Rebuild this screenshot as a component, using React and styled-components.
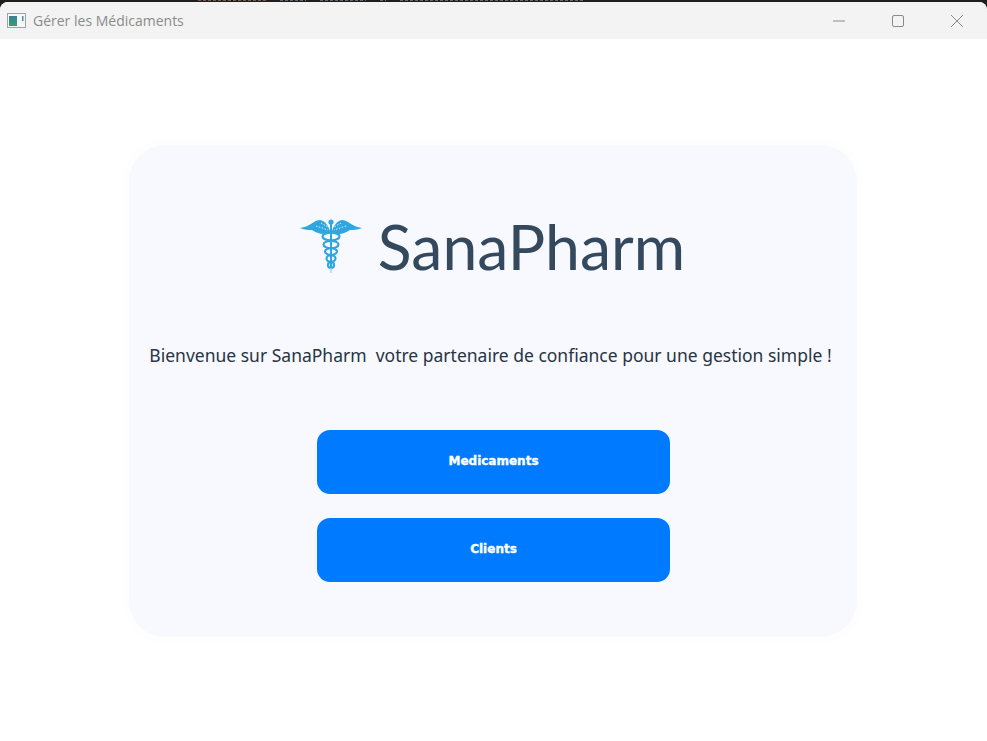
import React from 'react';
import styled, { createGlobalStyle } from 'styled-components';

const Global = createGlobalStyle`
  html, body {
    margin: 0;
    padding: 0;
    background: #fff;
  }
  body {
    font-family: "Open Sans", "Noto Sans", "Liberation Sans", sans-serif;
  }
`;

const Screen = styled.div`
  width: 987px;
  height: 741px;
  overflow: hidden;
  background: #1e1e1e;
`;

// sliver of the window behind, only a couple of pixels show
const BehindStrip = styled.svg`
  display: block;
  width: 987px;
  height: 2px;
`;

const Window = styled.div`
  height: 739px;
  background: #fff;
  border-radius: 8px 8px 0 0;
  display: flex;
  flex-direction: column;
  overflow: hidden;
`;

const TitleBar = styled.div`
  height: 37px;
  flex: none;
  background: #f3f3f3;
  display: flex;
  align-items: center;
  padding-left: 7px;
`;

const AppIcon = styled.svg`
  width: 19px;
  height: 15px;
  flex: none;
`;

const Title = styled.div`
  margin-left: 7px;
  font-size: 14px;
  color: #8b8b8b;
  flex: 1;
`;

const Controls = styled.div`
  display: flex;
  height: 100%;
  margin-right: 1px;
`;

const Control = styled.div`
  width: 59px;
  display: flex;
  align-items: center;
  justify-content: center;
  color: #8a8a8a;
`;

const Body = styled.div`
  flex: 1;
  display: flex;
  justify-content: center;
  padding: 106px 130px 0 129px;
`;

const Card = styled.div`
  width: 728px;
  height: 492px;
  background: #f8f9ff;
  border-radius: 36px;
  box-shadow: 0 0 0 6px #fefefe;
  display: flex;
  flex-direction: column;
  align-items: center;
`;

const Brand = styled.div`
  display: flex;
  align-items: center;
  margin-top: 60px;
  height: 82px;
  gap: 15px;
  margin-left: -2px;
`;

const Logo = styled.svg`
  width: 64px;
  height: 54px;
  flex: none;
`;

const BrandName = styled.div`
  font-family: Lato, "Noto Sans", sans-serif;
  font-size: 62.5px;
  line-height: 82px;
  color: #34495e;
`;

const Welcome = styled.p`
  margin: 55px 0 0 -5px;
  font-family: "Noto Sans", sans-serif;
  font-size: 17.5px;
  line-height: 26px;
  color: #28343f;
  white-space: pre;
`;

const Actions = styled.div`
  margin-top: 62px;
  display: flex;
  flex-direction: column;
  gap: 24px;
`;

const ActionButton = styled.button`
  width: 353px;
  height: 64px;
  border: none;
  border-radius: 13px;
  background: #007bff;
  color: #fff;
  font-family: "DejaVu Sans", sans-serif;
  font-weight: 700;
  font-size: 12px;
  -webkit-text-stroke: 0.35px #fff;
  padding: 0 0 2px 1px;
`;

const rings = [
  [17.5, 8.5, 3.8],
  [25.5, 7.5, 3.7],
  [32.5, 6, 3.4],
  [39.5, 4.5, 3.3],
  [46, 3, 3],
];

const Caduceus = () => (
  <Logo viewBox="0 0 64 54" fill="none">
    {/* wings */}
    <path d="M31 12 C29 6 26 2 21 1 C17 1 14 4 10 6 C7 8 4 8 1 9 C6 11 10 11 13 11 C16 13 20 15 25 15 L31 14 Z" fill="#2ea6e0" />
    <path d="M33 12 C35 6 38 2 43 1 C47 1 50 4 54 6 C57 8 60 8 63 9 C58 11 54 11 51 11 C48 13 44 15 39 15 L33 14 Z" fill="#2ea6e0" />
    <path d="M17 7 L29 11 M22 4 L29 8 M47 7 L35 11 M42 4 L35 8" stroke="#d8effb" strokeWidth="1" strokeDasharray="1.5 1.5" />
    {/* staff and knob */}
    <circle cx="32" cy="3" r="2.6" fill="#2ea6e0" />
    <rect x="31" y="4" width="2" height="46" fill="#2ea6e0" />
    {/* snakes */}
    {rings.map(([cy, rx, ry]) => (
      <ellipse key={cy} cx="32" cy={cy} rx={rx} ry={ry} stroke="#2ea6e0" strokeWidth="2.2" />
    ))}
    <path d="M32 49 V54" stroke="#9fd5f0" strokeWidth="1.4" />
  </Logo>
);

export default function App() {
  return (
    <>
      <Global />
      <Screen>
        <BehindStrip viewBox="0 0 987 2">
          <g strokeDasharray="3 2" strokeWidth="1">
            <path d="M198 0.5H266" stroke="#7d5a44" />
            <path d="M280 0.5H306M320 0.5H366M380 0.5H386" stroke="#5f6a74" />
            <path d="M400 0.5H585" stroke="#6a6a6a" />
          </g>
        </BehindStrip>
        <Window>
          <TitleBar>
            <AppIcon viewBox="0 0 19 15">
              <defs>
                <linearGradient id="appIconFill" x1="0" y1="0" x2="0" y2="1">
                  <stop offset="0" stopColor="#3d7f96" />
                  <stop offset="1" stopColor="#35a06f" />
                </linearGradient>
              </defs>
              <rect x="0.5" y="0.5" width="18" height="14" fill="#f5f7f8" stroke="#9aa3a8" />
              <rect x="2" y="3" width="8" height="10" fill="url(#appIconFill)" />
              <rect x="15" y="3" width="1.5" height="5" fill="#4d8fa3" />
            </AppIcon>
            <Title>Gérer les Médicaments</Title>
            <Controls>
              <Control>
                <svg width="12" height="2" viewBox="0 0 12 2">
                  <path d="M0 1H12" stroke="currentColor" />
                </svg>
              </Control>
              <Control>
                <svg width="12" height="12" viewBox="0 0 12 12" fill="none">
                  <rect x="0.5" y="0.5" width="11" height="11" rx="1.5" stroke="currentColor" />
                </svg>
              </Control>
              <Control>
                <svg width="12" height="12" viewBox="0 0 12 12" fill="none">
                  <path d="M0 0L12 12M12 0L0 12" stroke="currentColor" />
                </svg>
              </Control>
            </Controls>
          </TitleBar>
          <Body>
            <Card>
              <Brand>
                <Caduceus />
                <BrandName>SanaPharm</BrandName>
              </Brand>
              <Welcome>Bienvenue sur SanaPharm  votre partenaire de confiance pour une gestion simple !</Welcome>
              <Actions>
                <ActionButton>Medicaments</ActionButton>
                <ActionButton>Clients</ActionButton>
              </Actions>
            </Card>
          </Body>
        </Window>
      </Screen>
    </>
  );
}
